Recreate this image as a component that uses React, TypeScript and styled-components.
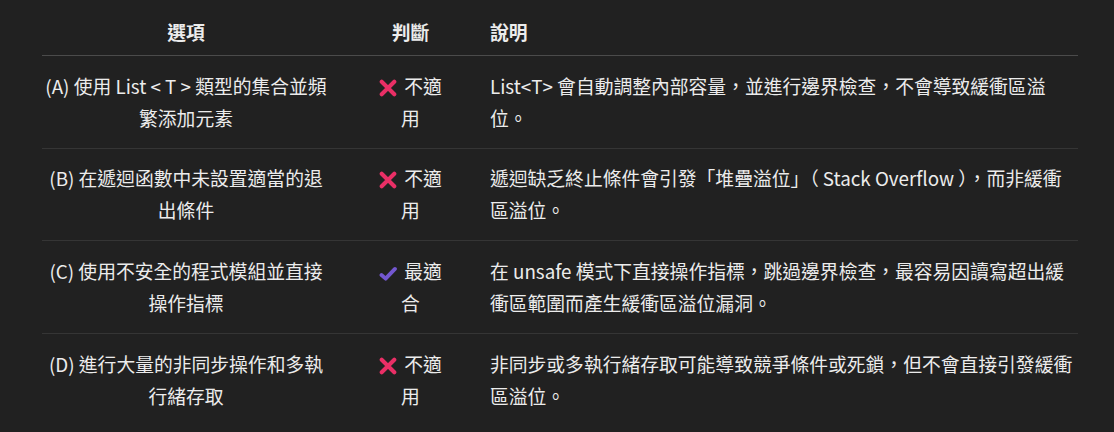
import styled, { createGlobalStyle } from "styled-components";

type Verdict = "bad" | "best";

type Row = {
  option: string;
  verdict: Verdict;
  label: string;
  note: string;
};

const rows: Row[] = [
  {
    option: "(A) 使用 List < T > 類型的集合並頻繁添加元素",
    verdict: "bad",
    label: "不適用",
    note: "List<T> 會自動調整內部容量，並進行邊界檢查，不會導致緩衝區溢位。",
  },
  {
    option: "(B) 在遞迴函數中未設置適當的退出條件",
    verdict: "bad",
    label: "不適用",
    note: "遞迴缺乏終止條件會引發「堆疊溢位」（ Stack Overflow ），而非緩衝區溢位。",
  },
  {
    option: "(C) 使用不安全的程式模組並直接操作指標",
    verdict: "best",
    label: "最適合",
    note: "在 unsafe 模式下直接操作指標，跳過邊界檢查，最容易因讀寫超出緩衝區範圍而產生緩衝區溢位漏洞。",
  },
  {
    option: "(D) 進行大量的非同步操作和多執行緒存取",
    verdict: "bad",
    label: "不適用",
    note: "非同步或多執行緒存取可能導致競爭條件或死鎖，但不會直接引發緩衝區溢位。",
  },
];

const GlobalStyle = createGlobalStyle`
  html, body {
    margin: 0;
    padding: 0;
    background: #212121;
  }
  body {
    font-family: "Noto Sans CJK TC", "Noto Sans", sans-serif;
    color: #ececec;
  }
`;

const Page = styled.div`
  padding: 8px 36px 0 42px;
`;

const Table = styled.table`
  width: 1036px;
  border-collapse: collapse;
  table-layout: fixed;
  font-size: 18.8px;
  line-height: 32px;
`;

// per-column padding: col1 | col2 | col3
const pads = ["0 23px 0 1px", "0 23px 0 25px", "0 0 0 23px"];

const HeadCell = styled.th<{ $align: "center" | "left"; $col: number }>`
  font-weight: 700;
  text-align: ${({ $align }) => $align};
  padding: ${({ $col }) => pads[$col]};
  padding-top: 8px;
  padding-bottom: 7px;
  border-bottom: 1px solid #4b4b4b;
`;

const BodyRow = styled.tr`
  border-bottom: 1px solid #353535;
  &:last-child {
    border-bottom: none;
  }
`;

const Cell = styled.td<{ $align: "center" | "left"; $col: number }>`
  text-align: ${({ $align }) => $align};
  padding: ${({ $col }) => pads[$col]};
  padding-top: 13.5px;
  padding-bottom: 14.2px;
  vertical-align: top;
`;

const Mark = styled.svg`
  width: 18px;
  height: 18px;
  vertical-align: -3px;
  margin-right: 7px;
`;

const VerdictIcon = ({ kind }: { kind: Verdict }) =>
  kind === "bad" ? (
    <Mark viewBox="0 0 16 16">
      <path
        d="M2.4 2.4 L13.6 13.6 M13.6 2.4 L2.4 13.6"
        stroke="#ea2f66"
        strokeWidth="3.6"
        strokeLinecap="round"
        fill="none"
      />
    </Mark>
  ) : (
    <Mark viewBox="0 0 16 16">
      <path
        d="M2.2 9.8 L5.9 13 L14.2 4.4"
        stroke="#7357d0"
        strokeWidth="3.4"
        strokeLinecap="round"
        strokeLinejoin="round"
        fill="none"
      />
    </Mark>
  );

export default function App() {
  return (
    <Page>
      <GlobalStyle />
      <Table>
        <colgroup>
          <col style={{ width: 310 }} />
          <col style={{ width: 115 }} />
          <col />
        </colgroup>
        <thead>
          <tr>
            <HeadCell $align="center" $col={0}>選項</HeadCell>
            <HeadCell $align="center" $col={1}>判斷</HeadCell>
            <HeadCell $align="left" $col={2}>說明</HeadCell>
          </tr>
        </thead>
        <tbody>
          {rows.map((r) => (
            <BodyRow key={r.option}>
              <Cell $align="center" $col={0}>{r.option}</Cell>
              <Cell $align="center" $col={1}>
                <VerdictIcon kind={r.verdict} />
                {r.label}
              </Cell>
              <Cell $align="left" $col={2}>{r.note}</Cell>
            </BodyRow>
          ))}
        </tbody>
      </Table>
    </Page>
  );
}
